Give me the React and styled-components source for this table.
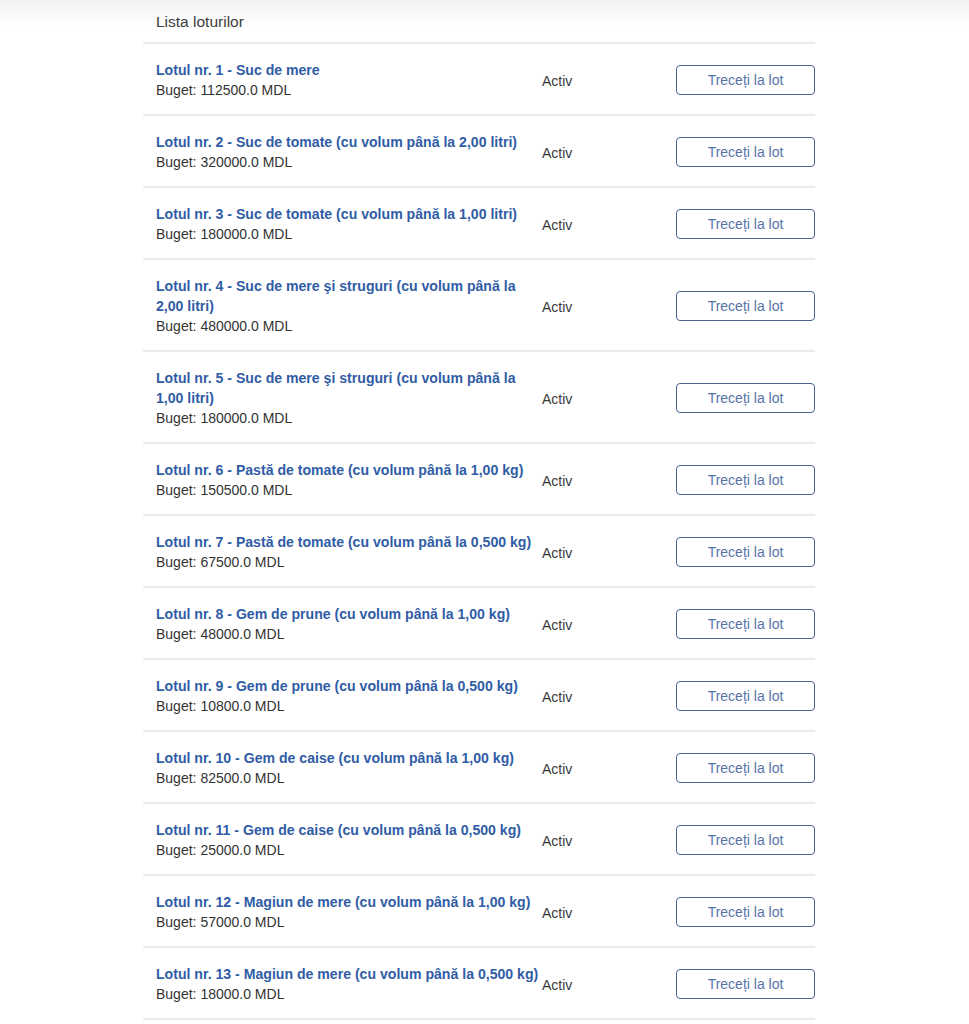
import React from "react"
import styled, { createGlobalStyle } from "styled-components"

const GlobalStyle = createGlobalStyle`
  html, body {
    margin: 0;
    padding: 0;
    background: #ffffff;
  }
  body {
    font-family: "Liberation Sans", Arial, Helvetica, sans-serif;
    color: #333;
  }
`

const Page = styled.div`
  background: linear-gradient(to bottom, #f2f2f2 0px, #f9f9f9 12px, #ffffff 28px);
  min-height: 1024px;
`

const Container = styled.section`
  width: 672px;
  margin-left: 143px;
`

const Heading = styled.h2`
  margin: 0;
  padding: 13px 13px 11px;
  font-size: 15.5px;
  font-weight: normal;
  line-height: 18px;
  color: #3d3d3d;
  border-bottom: 2px solid #ebebeb;
`

const Row = styled.div`
  display: grid;
  grid-template-columns: 387px 1fr 139px;
  align-items: center;
  padding: 16px 0 14px 13px;
  border-bottom: 2px solid #ebebeb;
`

const Info = styled.div`
  line-height: 20px;
  font-size: 14px;
  min-width: 0;
`

const Title = styled.a`
  display: block;
  color: #305ca6;
  font-size: 14.1px;
  font-weight: bold;
  text-decoration: none;
`

const Budget = styled.div`
  color: #333;
`

const Status = styled.div`
  font-size: 14px;
  color: #3a3a3a;
  padding-top: 2px;
  margin-left: -1px;
`

const Button = styled.button`
  height: 30px;
  width: 139px;
  background: #fff;
  border: 1.5px solid #4a6591;
  border-radius: 4px;
  font-family: inherit;
  font-size: 14px;
  color: #5673a6;
  cursor: pointer;
`

const lots = [
  ["Suc de mere", "112500.0"],
  ["Suc de tomate (cu volum până la 2,00 litri)", "320000.0"],
  ["Suc de tomate (cu volum până la 1,00 litri)", "180000.0"],
  ["Suc de mere şi struguri (cu volum până la 2,00 litri)", "480000.0"],
  ["Suc de mere şi struguri (cu volum până la 1,00 litri)", "180000.0"],
  ["Pastă de tomate (cu volum până la 1,00 kg)", "150500.0"],
  ["Pastă de tomate (cu volum până la 0,500 kg)", "67500.0"],
  ["Gem de prune (cu volum până la 1,00 kg)", "48000.0"],
  ["Gem de prune (cu volum până la 0,500 kg)", "10800.0"],
  ["Gem de caise (cu volum până la 1,00 kg)", "82500.0"],
  ["Gem de caise (cu volum până la 0,500 kg)", "25000.0"],
  ["Magiun de mere (cu volum până la 1,00 kg)", "57000.0"],
  ["Magiun de mere (cu volum până la 0,500 kg)", "18000.0"],
]

const App = () => {
  return (
    <Page>
      <GlobalStyle />
      <Container>
        <Heading>Lista loturilor</Heading>
        {lots.map(([name, budget], i) => (
          <Row key={i}>
            <Info>
              <Title href="#">
                Lotul nr. {i + 1} - {name}
              </Title>
              <Budget>Buget: {budget} MDL</Budget>
            </Info>
            <Status>Activ</Status>
            <Button>Treceți la lot</Button>
          </Row>
        ))}
      </Container>
    </Page>
  )
}

export default App
